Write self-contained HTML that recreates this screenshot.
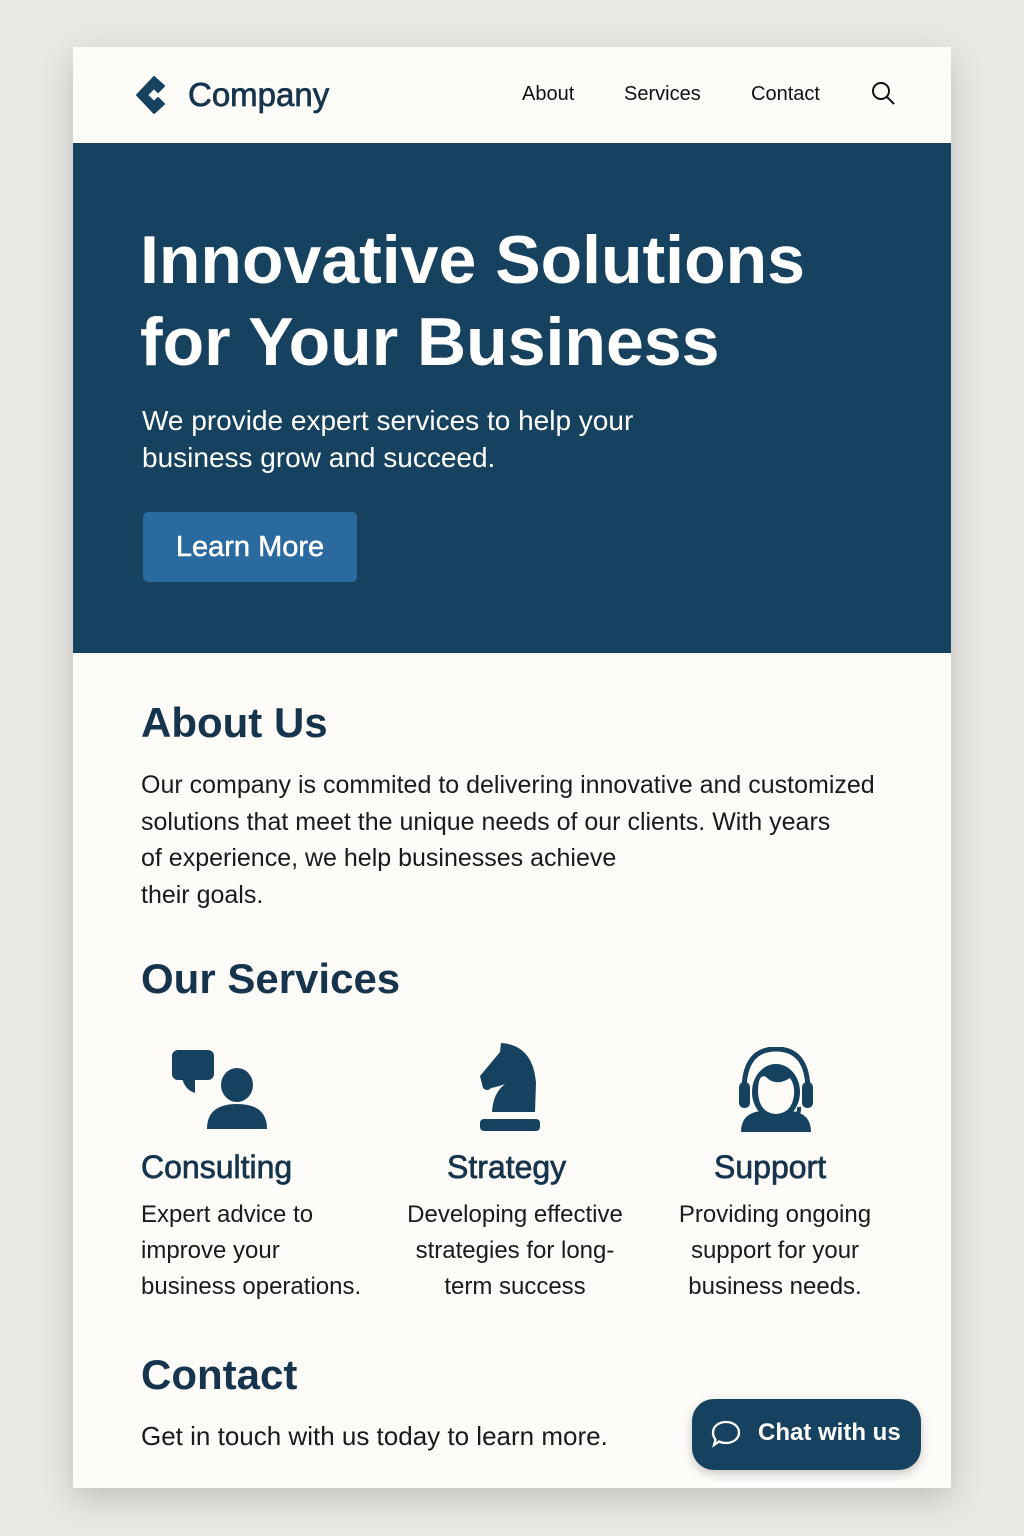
<!DOCTYPE html>
<html><head><meta charset="utf-8"><style>
*{margin:0;padding:0;box-sizing:border-box}
body{width:1024px;height:1536px;background:#e9e8e4;font-family:"Liberation Sans",sans-serif;position:relative;overflow:hidden}
.card{position:absolute;left:73px;top:47px;width:878px;height:1441px;background:#fcfbf8;box-shadow:0 10px 30px rgba(0,0,0,.18)}
.a{position:absolute;white-space:nowrap}
.hero{position:absolute;left:0;top:96px;width:878px;height:510px;background:#17425f}
.dk{color:#17344d}
.md{-webkit-text-stroke:0.7px currentColor}
</style></head><body>
<div class="card">
 <svg class="a" style="left:62px;top:28px" width="38" height="40" viewBox="0 0 38 40"><path d="M29 11 L19 2 L2 20 L19 38 L29 29 L23 23 L19 27 L12 20 L19 13 L23 17 Z" fill="#17425f" stroke="#17425f" stroke-width="2" stroke-linejoin="round"/></svg>
 <div class="a dk md" style="left:115px;top:29px;font-size:33px;">Company</div>
 <div class="a" style="left:449px;top:36px;font-size:20px;color:#111">About</div>
 <div class="a" style="left:551px;top:36px;font-size:20px;color:#111">Services</div>
 <div class="a" style="left:678px;top:36px;font-size:20px;color:#111">Contact</div>
 <svg class="a" style="left:798px;top:34px" width="26" height="26" viewBox="0 0 26 26"><circle cx="10" cy="10" r="8" fill="none" stroke="#111" stroke-width="2"/><path d="M16 16 L23 23" stroke="#111" stroke-width="2"/></svg>
 <div class="hero">
  <div class="a" style="left:67px;top:76px;font-size:68px;font-weight:bold;color:#fff;line-height:82px">Innovative Solutions<br>for Your Business</div>
  <div class="a" style="left:69px;top:259px;font-size:28px;color:#fff;line-height:37px">We provide expert services to help your<br>business grow and succeed.</div>
  <div class="a md" style="left:70px;top:369px;width:214px;height:70px;background:#2a6a9e;border-radius:5px;color:#fff;font-size:29px;text-align:center;line-height:70px;-webkit-text-stroke:0.5px #fff">Learn More</div>
 </div>
 <div class="a dk" style="left:68px;top:652px;font-size:42px;font-weight:bold">About Us</div>
 <div class="a" style="left:68px;top:720px;font-size:25px;line-height:36.5px;color:#1a1a1a">Our company is commited to delivering innovative and customized<br>solutions that meet the unique needs of our clients. With years<br>of experience, we help businesses achieve<br>their goals.</div>
 <div class="a dk" style="left:68px;top:908px;font-size:42px;font-weight:bold">Our Services</div>
 <svg class="a" style="left:97px;top:1001px" width="100" height="84" viewBox="0 0 100 84"><rect x="2" y="2" width="42" height="30" rx="6" fill="#17425f"/><path d="M12 30 L25 30 L25 45 Q15 42 12 30Z" fill="#17425f"/><ellipse cx="67" cy="37" rx="16" ry="17" fill="#17425f"/><path d="M37 81 Q37 56 67 56 Q97 56 97 81 Z" fill="#17425f"/></svg>
 <svg class="a" style="left:400px;top:996px" width="72" height="90" viewBox="0 0 72 90"><path d="M28 0 Q60 2 63 40 L62 69 L19 69 Q20 50 32 41 Q24 44 18 45 Q14 49 10 45 L7 33 L27 9 Z" fill="#17425f"/><rect x="7" y="76" width="60" height="12" rx="4" fill="#17425f"/></svg>
 <svg class="a" style="left:665px;top:1000px" width="76" height="86" viewBox="0 0 76 86"><path d="M6 44 Q6 2 38 2 Q70 2 70 44" fill="none" stroke="#17425f" stroke-width="5"/><rect x="1" y="35" width="11" height="26" rx="5" fill="#17425f"/><rect x="64" y="35" width="11" height="26" rx="5" fill="#17425f"/><ellipse cx="38" cy="45" rx="24" ry="28" fill="#17425f"/><path d="M20 45 Q20 26 28 30 Q38 40 52 31 Q57 38 56 48 Q54 66 38 67 Q21 66 20 45Z" fill="#fcfbf8"/><path d="M61 60 Q62 68 54 70" fill="none" stroke="#17425f" stroke-width="4"/><path d="M3 85 Q3 66 23 64 Q38 76 53 64 Q73 66 73 85 Z" fill="#17425f"/></svg>
 <div class="a dk md" style="left:68px;top:1102px;font-size:32px">Consulting</div>
 <div class="a dk md" style="left:374px;top:1102px;font-size:32px">Strategy</div>
 <div class="a dk md" style="left:641px;top:1102px;font-size:32px">Support</div>
 <div class="a" style="left:68px;top:1150px;font-size:24px;line-height:36px;color:#1a1a1a">Expert advice to<br>improve your<br>business operations.</div>
 <div class="a" style="left:317px;top:1150px;width:250px;text-align:center;font-size:24px;line-height:36px;color:#1a1a1a">Developing effective<br>strategies for long-<br>term success</div>
 <div class="a" style="left:577px;top:1150px;width:250px;text-align:center;font-size:24px;line-height:36px;color:#1a1a1a">Providing ongoing<br>support for your<br>business needs.</div>
 <div class="a dk" style="left:68px;top:1304px;font-size:42px;font-weight:bold">Contact</div>
 <div class="a" style="left:68px;top:1374px;font-size:26px;color:#1a1a1a">Get in touch with us today to learn more.</div>
</div>
<div class="a" style="left:692px;top:1399px;width:229px;height:71px;background:#17425f;border-radius:22px;box-shadow:0 4px 10px rgba(0,0,0,.2)">
 <svg class="a" style="left:18px;top:20px" width="32" height="30" viewBox="0 0 32 30"><path d="M16 3 C24 3 29 8 29 13.5 C29 19 24 24 16 24 C13 24 11 23.5 9 22.5 L4 26 L5.5 20.5 C3.8 18.5 3 16 3 13.5 C3 8 8 3 16 3Z" fill="none" stroke="#fff" stroke-width="2.3"/></svg>
 <div class="a" style="left:66px;top:20px;font-size:24px;font-weight:bold;color:#fff">Chat with us</div>
</div>
</body></html>
